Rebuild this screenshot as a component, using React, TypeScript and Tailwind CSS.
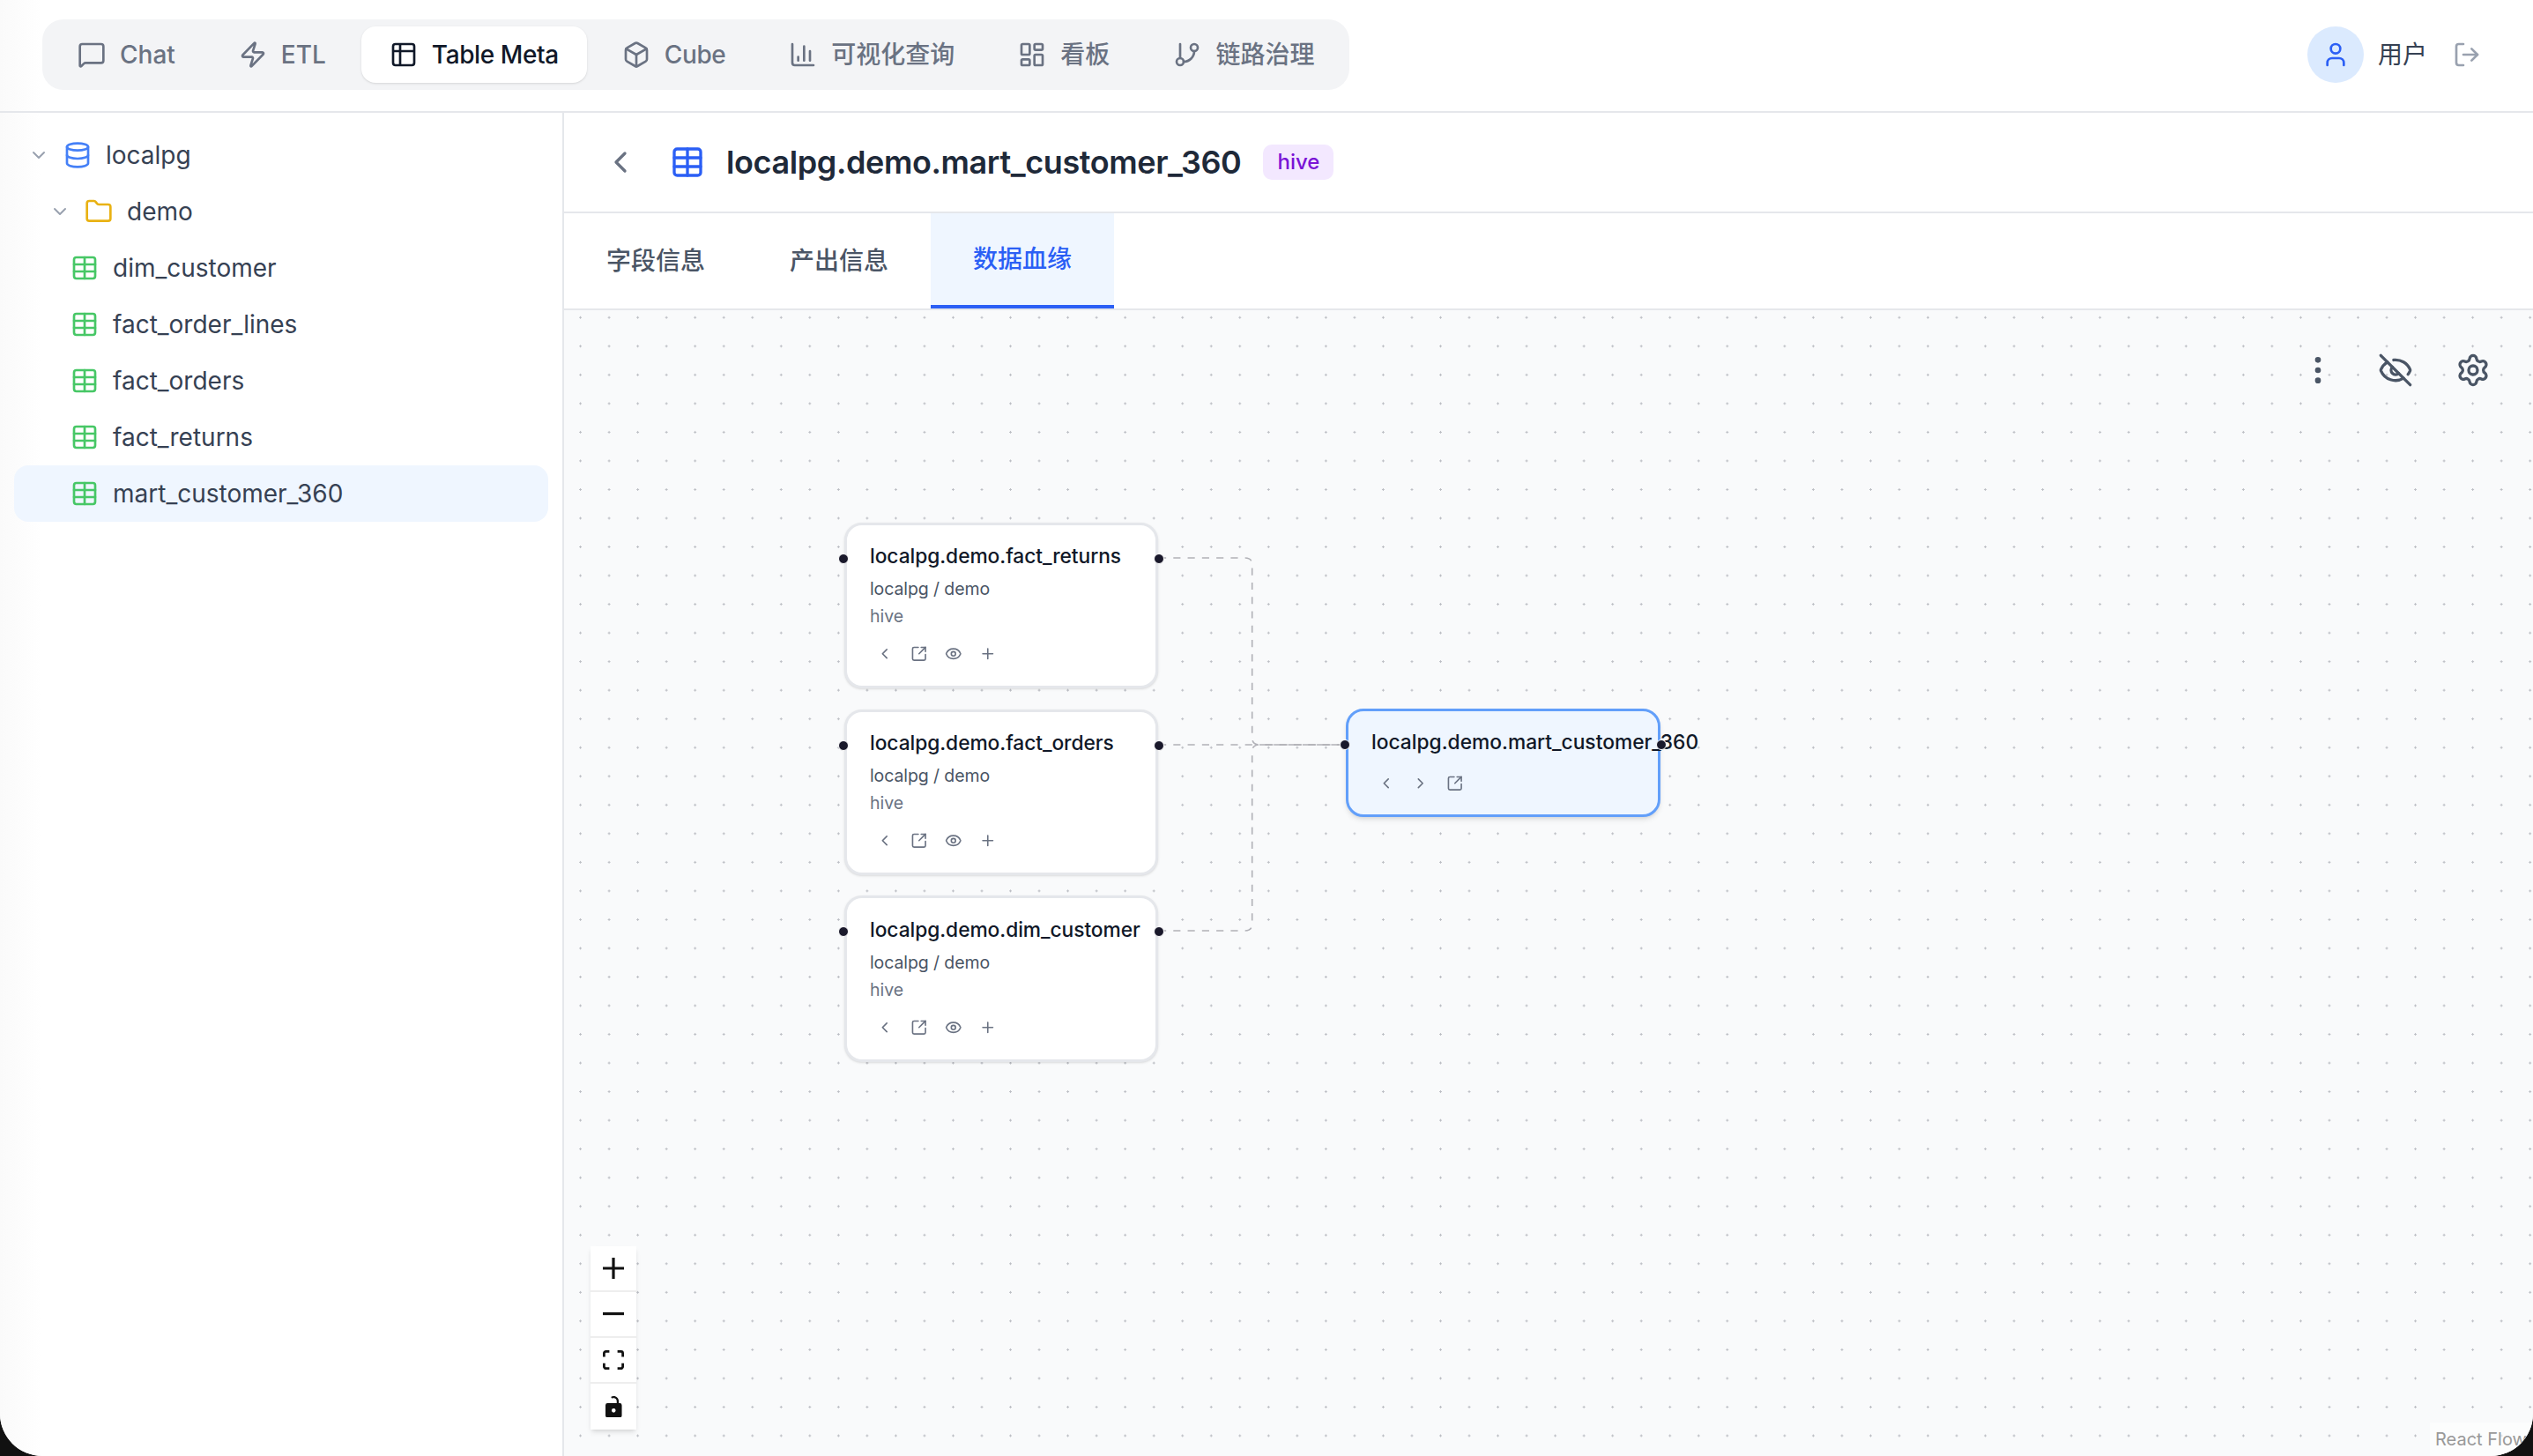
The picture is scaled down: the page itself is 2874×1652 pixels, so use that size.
import {
  BarChart3,
  Box,
  ChevronDown,
  ChevronLeft,
  ChevronRight,
  Database,
  Eye,
  EyeOff,
  Folder,
  GitBranch,
  LayoutDashboard,
  LogOut,
  MessageSquare,
  MoreVertical,
  Plus,
  Settings,
  SquareArrowOutUpRight,
  Table,
  Table2,
  User,
  Zap,
} from 'lucide-react';

const navItems = [
  { label: 'Chat', icon: MessageSquare },
  { label: 'ETL', icon: Zap },
  { label: 'Table Meta', icon: Table2, active: true, tight: true },
  { label: 'Cube', icon: Box, tight: true },
  { label: '可视化查询', icon: BarChart3 },
  { label: '看板', icon: LayoutDashboard },
  { label: '链路治理', icon: GitBranch },
];

const tables = ['dim_customer', 'fact_order_lines', 'fact_orders', 'fact_returns', 'mart_customer_360'];

function Handle({ side, className }: { side: 'left' | 'right'; className: string }) {
  return (
    <span
      className={`absolute h-[12px] w-[12px] rounded-full border border-white bg-[#1a192b] ${className} ${
        side === 'left' ? 'left-[-10px]' : 'right-[-10px]'
      }`}
    />
  );
}

function NodeButton({ children }: { children: React.ReactNode }) {
  return <span className="flex h-[32.5px] w-[32.5px] items-center justify-center text-gray-500">{children}</span>;
}

function SourceNode({ name, className }: { name: string; className: string }) {
  return (
    <div
      className={`absolute left-[318px] w-[356px] rounded-[20px] border-[3px] border-gray-200 bg-white px-[26px] pb-[20px] pt-[19.5px] shadow-sm ${className}`}
    >
      <div className="whitespace-nowrap text-[22.78px] font-medium leading-[32.5px] tracking-[-0.06px] text-gray-900">{name}</div>
      <div className="mt-[7.5px] text-[19.5px] leading-[26px] tracking-[-0.1px] text-gray-600">localpg / demo</div>
      <div className="mt-[5px] text-[19.5px] leading-[26px] text-gray-500">hive</div>
      <div className="mt-[13.75px] flex gap-[6.5px]">
        <NodeButton><ChevronLeft className="h-[19.5px] w-[19.5px]" /></NodeButton>
        <NodeButton><SquareArrowOutUpRight className="h-[19.5px] w-[19.5px]" /></NodeButton>
        <NodeButton><Eye className="h-[19.5px] w-[19.5px]" /></NodeButton>
        <NodeButton><Plus className="h-[19.5px] w-[19.5px]" /></NodeButton>
      </div>
      <Handle side="left" className="top-[32px]" />
      <Handle side="right" className="top-[32px]" />
    </div>
  );
}

function ControlButton({ children, last }: { children: React.ReactNode; last?: boolean }) {
  return (
    <div className={`flex h-[52px] items-center justify-center ${last ? '' : 'border-b-2 border-[#eeeeee]'}`}>
      {children}
    </div>
  );
}

export default function App() {
  return (
    <div className="h-screen w-full overflow-hidden bg-[#111111] font-['Inter','Noto_Sans_CJK_SC',sans-serif]">
      <div className="flex h-full flex-col overflow-hidden rounded-b-[48px] bg-white">
        {/* Header */}
        <header className="flex h-[128px] shrink-0 items-center justify-between border-b-2 border-gray-200 bg-[linear-gradient(90deg,#fafafa,#ffffff_48px)] pb-[2px] pl-[48px] pr-[59px]">
          <nav className="flex h-[80px] items-center gap-[8px] rounded-[24px] bg-gray-100 px-[8px]">
            {navItems.map(({ label, icon: Icon, active, tight }) => (
              <div
                key={label}
                className={`flex h-[64px] items-center gap-[16px] rounded-[16px] px-[32px] text-[28px] font-medium ${
                  tight ? 'tracking-[-0.4px]' : ''
                } ${active ? 'bg-white text-gray-900 shadow-sm' : 'text-gray-500'}`}
              >
                <Icon className="h-[32px] w-[32px]" />
                {label}
              </div>
            ))}
          </nav>
          <div className="flex items-center">
            <div className="flex h-[64px] w-[64px] items-center justify-center rounded-full bg-blue-100">
              <User className="h-[32px] w-[32px] text-[#2b5ff5]" />
            </div>
            <span className="ml-[16px] text-[28px] text-gray-700">用户</span>
            <LogOut className="ml-[29px] h-[32px] w-[32px] text-gray-400" />
          </div>
        </header>

        <div className="flex min-h-0 flex-1">
          {/* Tree */}
          <aside className="w-[640px] shrink-0 border-r-2 border-gray-200 bg-[linear-gradient(90deg,#fafafa,#ffffff_48px)] pl-[16px] pr-[16px] pt-[16px] text-[28px] text-gray-700">
            <div className="flex h-[64px] items-center gap-[16px] pl-[16px]">
              <ChevronDown className="h-[24px] w-[24px] text-gray-400" />
              <Database className="h-[32px] w-[32px] text-[#4580f7]" />
              localpg
            </div>
            <div className="flex h-[64px] items-center gap-[16px] pl-[40px]">
              <ChevronDown className="h-[24px] w-[24px] text-gray-400" />
              <Folder className="h-[32px] w-[32px] text-[#e9b213]" />
              demo
            </div>
            {tables.map((t) => (
              <div
                key={t}
                className={`flex h-[64px] items-center gap-[16px] rounded-[16px] pl-[64px] ${
                  t === 'mart_customer_360' ? 'bg-blue-50' : ''
                }`}
              >
                <Table className="h-[32px] w-[32px] text-[#47c766]" />
                {t}
              </div>
            ))}
          </aside>

          <main className="flex min-w-0 flex-1 flex-col">
            <div className="flex h-[114px] shrink-0 items-center border-b-2 border-gray-200 pb-[1px] pl-[44px]">
              <ChevronLeft className="h-[40px] w-[40px] text-gray-500" />
              <Table className="ml-[36px] h-[40px] w-[40px] text-[#2b5ff5]" />
              <h1 className="ml-[24px] text-[36px] font-semibold tracking-[-0.4px] text-gray-800">localpg.demo.mart_customer_360</h1>
              <span className="ml-[25px] flex h-[40px] w-[80px] items-center justify-center rounded-[10px] bg-purple-100 text-[24px] font-medium text-[#7a14d6]">
                hive
              </span>
            </div>

            <div className="flex h-[110px] shrink-0 border-b-2 border-gray-200 text-[28px] font-medium">
              <div className="flex w-[208px] items-center justify-center text-gray-600">字段信息</div>
              <div className="flex w-[208px] items-center justify-center text-gray-600">产出信息</div>
              <div className="flex w-[208px] items-center justify-center border-b-4 border-[#2b5ff5] bg-blue-50 text-[#2b5ff5]">
                数据血缘
              </div>
            </div>

            {/* Lineage canvas */}
            <div className="relative min-h-0 flex-1 overflow-hidden bg-[#f9fafb] bg-[radial-gradient(circle,#bcbec4_1px,transparent_1.3px)] bg-[size:32.54px_32.54px] bg-[position:2.3px_-8px]">
              <svg className="absolute inset-0 h-full w-full" fill="none" stroke="#b1b1b7" strokeWidth="1.63" strokeDasharray="8.14">
                <path d="M675 281H772.7Q780.7 281 780.7 289V485Q780.7 493 788.7 493H886" />
                <path d="M675 493H886" />
                <path d="M675 704H772.7Q780.7 704 780.7 696V501Q780.7 493 788.7 493H886" />
              </svg>

              <SourceNode name="localpg.demo.fact_returns" className="top-[240.5px]" />
              <SourceNode name="localpg.demo.fact_orders" className="top-[452.5px]" />
              <SourceNode name="localpg.demo.dim_customer" className="top-[664px]" />

              <div className="absolute left-[887px] top-[451.5px] w-[357px] rounded-[20px] border-[3px] border-[#629ffa] bg-blue-50 px-[26px] pb-[19px] pt-[19.5px] shadow-md">
                <div className="whitespace-nowrap text-[22.78px] font-medium leading-[32.5px] text-gray-900">
                  localpg.demo.mart_customer_360
                </div>
                <div className="mt-[13.75px] flex gap-[6.5px]">
                  <NodeButton><ChevronLeft className="h-[19.5px] w-[19.5px]" /></NodeButton>
                  <NodeButton><ChevronRight className="h-[19.5px] w-[19.5px]" /></NodeButton>
                  <NodeButton><SquareArrowOutUpRight className="h-[19.5px] w-[19.5px]" /></NodeButton>
                </div>
                <Handle side="left" className="top-[32.5px]" />
                <Handle side="right" className="top-[32.5px]" />
              </div>

              {/* Toolbar */}
              <div className="absolute right-[48px] top-[48px] flex gap-[48px] text-gray-600">
                <MoreVertical className="h-[40px] w-[40px]" />
                <EyeOff className="h-[40px] w-[40px]" />
                <Settings className="h-[40px] w-[40px]" />
              </div>

              {/* Zoom controls */}
              <div className="absolute bottom-[30px] left-[30px] w-[52px] bg-white shadow-md">
                <ControlButton>
                  <svg viewBox="0 0 32 32" className="w-[24px]" fill="#111"><path d="M32 18.133H18.133V32h-4.266V18.133H0v-4.266h13.867V0h4.266v13.867H32z" /></svg>
                </ControlButton>
                <ControlButton>
                  <svg viewBox="0 0 32 5" className="w-[24px]" fill="#111"><path d="M0 0h32v4.2H0z" /></svg>
                </ControlButton>
                <ControlButton>
                  <svg viewBox="0 0 32 30" className="w-[24px]" fill="#111"><path d="M3.692 4.63c0-.53.4-.938.939-.938h5.215V0H4.708C2.13 0 0 2.054 0 4.63v5.216h3.692V4.631zM27.354 0h-5.2v3.692h5.17c.53 0 .984.4.984.939v5.215H32V4.631A4.624 4.624 0 0027.354 0zm.954 24.83c0 .532-.4.94-.939.94h-5.215v3.768h5.215c2.577 0 4.631-2.13 4.631-4.707v-5.139h-3.692v5.139zm-23.677.94c-.531 0-.939-.4-.939-.94v-5.138H0v5.139c0 2.577 2.13 4.707 4.708 4.707h5.138V25.77H4.631z" /></svg>
                </ControlButton>
                <ControlButton last>
                  <svg viewBox="0 0 25 32" className="w-[19px]" fill="#111"><path d="M21.333 10.667H19.81V7.619C19.81 3.429 16.38 0 12.19 0c-1.523 0-2.952.457-4.114 1.22l1.828 2.438c.686-.381 1.447-.61 2.286-.61 2.59 0 4.571 1.98 4.571 4.571v3.048H3.048A3.056 3.056 0 000 13.714v15.238A3.056 3.056 0 003.048 32h18.285a3.056 3.056 0 003.048-3.048V13.714a3.056 3.056 0 00-3.048-3.047zM12.19 24.533a3.056 3.056 0 01-3.047-3.047 3.056 3.056 0 013.047-3.048 3.056 3.056 0 013.048 3.048 3.056 3.056 0 01-3.048 3.047z" /></svg>
                </ControlButton>
              </div>

              <div className="absolute bottom-0 right-0 w-[117px] whitespace-nowrap bg-white/50 pb-[6px] pl-[6px] pt-[6px] text-[20px] leading-[26px] text-[#999999]">
                React Flow
              </div>
            </div>
          </main>
        </div>
      </div>
    </div>
  );
}
